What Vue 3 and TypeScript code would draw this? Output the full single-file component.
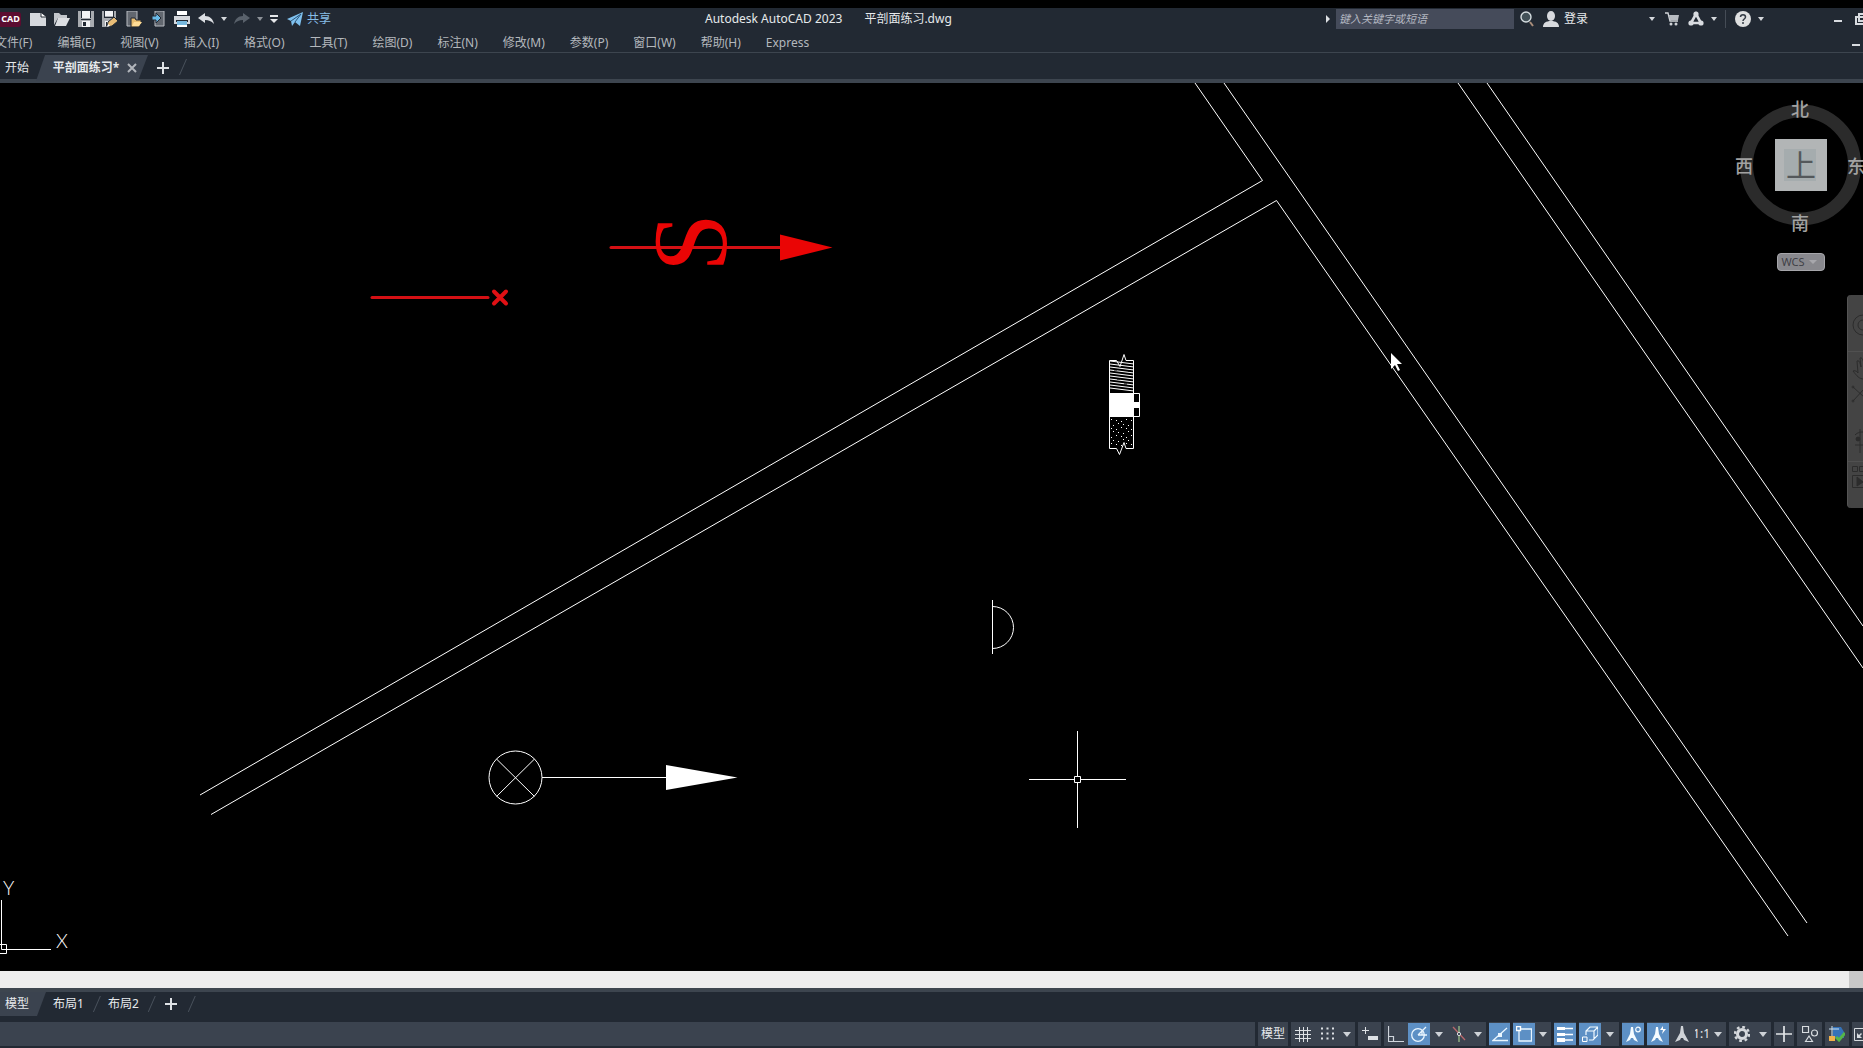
<script setup lang="ts">
interface Tool { id: string; label: string; cls: string }
interface StatusCell { id: string; label: string; w: number; sep?: boolean; on?: boolean; text?: string }

const icons: Record<string, string> = {
  new: '<path d="M0 2h11l5 4v9H0z" fill="#d5d8dd"/><path d="M11 2v4h5" fill="#fff" stroke="#222933"/>',
  open: '<path d="M0 14V2h5l2 2h6v3H4z" fill="#c3c6cb"/><path d="M4 7h12l-4 8H1z" fill="#dcdee2"/>',
  save: '<path d="M0 0h16v16H0z" fill="#a8abb0"/><path d="M4 0h8v7H4zM4 10h8v6H4z" fill="#f2f3f5"/><path d="M3 0h1v7H3zM12 0h1v7h-1zM3 8h10v1H3z" fill="#222933"/><path d="M5 11h3v4H5z" fill="#222933"/>',
  saveas: '<path d="M0 0h14v8l-6 8H0z" fill="#a8abb0"/><path d="M3 0h8v5H3zM3 10h6v5H3z" fill="#f2f3f5"/><path d="M2 0h1v6h8V0h1v7H2zM4 11h1v4H4z" fill="#222933"/><path d="M5 16l1-5 6-5 4 4-6 5z" fill="#e9bd77" stroke="#222933"/><path d="M5 16l1-3 2 2z" fill="#fff"/>',
  cloudopen: '<path d="M1 0h10v15H1z" fill="#62676f" stroke="#b9bdc3"/><path d="M5 16V7h4l1 2h5v2h1l-3 5z" fill="#e8bd70" stroke="#222933"/><path d="M6 15l2-4h8l-3 4z" fill="#ffdc96"/>',
  cloudsave: '<path d="M5 0h9v15H5z" fill="#62676f" stroke="#b9bdc3"/><path d="M2 5h4V2l5 5-5 5V9H2z" fill="#69b9e7" stroke="#222933"/>',
  print: '<path d="M3 0h10v4H3z" fill="#fff"/><path d="M0 5h16v8H0z" fill="#d4d7dc"/><path d="M2 9h12v2H2z" fill="#222933"/><path d="M3 10h10v6H3z" fill="#78b9df"/><path d="M3 14h10v2H3z" fill="#fff"/>',
  undo: '<path d="M0 7l7-5v3c5 0 8 3 9 8-3-3-5-4-9-4v3z" fill="#dcdfe3"/>',
  redo: '<path d="M16 7L9 2v3c-5 0-8 3-9 8 3-3 5-4 9-4v3z" fill="#59616b"/>',
  caret: '<path d="M5 6h6l-3 4z" fill="#d5d8dc"/>',
  bigcaret: '<path d="M4 6h8l-4 5z" fill="#ced2d7"/>',
  custom: '<path d="M4 4h8v2H4zM4 8h8l-4 4z" fill="#e5e7ea"/>',
  send: '<path d="M0 8L16 1l-3 14-5-4-3 4-1-5z" fill="#7fc0ee"/><path d="M4 10l10-7-6 8" fill="none" stroke="#2b567b"/>',
  search: '<circle cx="7" cy="6" r="5" fill="#435158" stroke="#d5dcdf" stroke-width="1.4"/><path d="M11 11l3 4" stroke="#a98d7a" stroke-width="2"/>',
  user: '<ellipse cx="8" cy="5" rx="4" ry="5" fill="#d8dade"/><path d="M0 16c0-4 3-6 8-6s8 2 8 6z" fill="#d8dade"/>',
  cart: '<path d="M1 2h3l2 8h8" fill="none" stroke="#cfd2d6" stroke-width="1.4"/><path d="M5 4h10l-1 5H6z" fill="#b8bcc2"/><circle cx="7" cy="13" r="1.5" fill="#cfd2d6"/><circle cx="12" cy="13" r="1.5" fill="#cfd2d6"/>',
  apps: '<path d="M8 3l5 9H3z" fill="none" stroke="#d8dbe0" stroke-width="2.6"/><circle cx="8" cy="3" r="2.6" fill="#d8dbe0"/><circle cx="3" cy="12" r="2.6" fill="#d8dbe0"/><circle cx="13" cy="12" r="2.6" fill="#d8dbe0"/>',
  help: '<circle cx="8" cy="8" r="8" fill="#dfe0e1"/><path d="M5.500 6c0-3 5-3 5 0 0 2-2.500 2-2.500 4M8 11v2" fill="none" stroke="#343b45" stroke-width="1.500"/>',
  grid: '<path d="M4.500 1v15M8.500 1v15M12.500 1v15M0 4.500h16M0 8.500h16M0 12.500h16" stroke="#dde1e5" fill="none"/>',
  dots: '<path d="M2 2.500h13M2 7.500h13M2 12.500h13" stroke="#dde1e5" stroke-width="2" stroke-dasharray="2 3.500" fill="none"/>',
  dyn: '<path d="M0 4.500h7M3.500 1v7" stroke="#dde1e5" fill="none"/><path d="M6 10h10v4H6z" fill="#dde1e5"/>',
  ortho: '<path d="M.5 0v15.500H16M.5 10.500h5v5" fill="none" stroke="#cfd5dc" stroke-width="1.200"/>',
  polar: '<circle cx="7" cy="9" r="6.300" fill="none" stroke="#eaf6ff" stroke-width="1.300"/><path d="M7 9h9M7 9l8-8M11 5v4" fill="none" stroke="#eaf6ff" stroke-width="1.300"/>',
  iso: '<path d="M2 1l12 13" stroke="#b8686c" stroke-width="1.300"/><path d="M8 0v16" stroke="#9abf88" stroke-width="1.300"/><circle cx="8" cy="8" r="1.600" fill="#333b46" stroke="#dde1e5"/>',
  track: '<path d="M15 2L1 14.500h15" fill="none" stroke="#eaf6ff" stroke-width="1.300"/><path d="M6 7h4v4H6z" fill="#eaf6ff"/>',
  osnap: '<path d="M3 3h12.500v12H3z" fill="none" stroke="#eaf6ff" stroke-width="1.300"/><path d="M.5.5h4v4h-4z" fill="#5d90c5" stroke="#fff" stroke-width="1.400"/>',
  lwt: '<path d="M0 1h8v3H0zM0 7h8v3H0zM0 12h8v4H0z" fill="#fff"/><path d="M8 2.500h8M8 8.500h8M8 14h8" stroke="#fff" stroke-width="1.300"/>',
  cube: '<path d="M4 9V5l4-4h8v8l-5 5H7M4 5h8v8M12 5l4-4" fill="none" stroke="#f2faff" stroke-width="1.200"/><path d="M.5 11h4.500v4.500H.5z" fill="#5d90c5" stroke="#fff"/>',
  annoA: '<path d="M6 1h2l1 7 4 8-4-2-1-2H6l-1 2-4 2 4-8z" fill="#f5fbff"/><circle cx="13" cy="3.500" r="2.300" fill="none" stroke="#f5fbff" stroke-width="1.200"/>',
  annoB: '<path d="M6 1h2l1 7 4 8-4-2-1-2H6l-1 2-4 2 4-8z" fill="#f5fbff"/><path d="M13 0l-3 4h3l-1 4 4-5h-3z" fill="#fff"/>',
  anno: '<path d="M7 0h2l1 7 5 9-5-2-1-2H7l-1 2-5 2 5-9z" fill="#cfd3d8"/>',
  gear: '<circle cx="8" cy="8" r="4.500" fill="none" stroke="#d5d8dc" stroke-width="3"/><circle cx="8" cy="8" r="7" fill="none" stroke="#d5d8dc" stroke-width="2.400" stroke-dasharray="2.750 2.750"/>',
  plus: '<path d="M8 0v16M0 8h16" stroke="#e2e5e8" stroke-width="1.700"/>',
  shapes: '<path d="M.5.5h6v6h-6zM7 10l3.500 5.500h-7z" fill="none" stroke="#d8dce0" stroke-width="1.200"/><circle cx="12.500" cy="7" r="3" fill="none" stroke="#d8dce0" stroke-width="1.200"/>',
  perf: '<path d="M4 1h8l3 5v6H4z" fill="#3472b9"/><path d="M0 3h10M3 0v14" stroke="#cfe6f7"/><path d="M0 10h6v5H0z" fill="#f0b14a"/><path d="M7 11l3 3 6-7" fill="none" stroke="#55b548" stroke-width="3"/>',
  expand: '<path d="M.5 2.500h15v12H.5z" fill="none" stroke="#d8dce0"/><path d="M3 12V7l2 2 2-2 1 1-2 2 2 2z" fill="#d8dce0"/>',
  add: '<path d="M8 2v12M2 8h12" stroke="#dfe2e6" stroke-width="2"/>',
  close: '<path d="M4 4l8 8M12 4l-8 8" stroke="#b2b6bc" stroke-width="2"/>',
  min: '<path d="M4 9h8v2H4z" fill="#d8dbe0"/>',
  restore: '<path d="M4 3h8v7H4zM1 6h8v7H1z" fill="#222933" stroke="#d8dbe0" stroke-width="2"/>',
}

const quick: Tool[] = [
  { id: 'new', label: '新建', cls: 'tool' },
  { id: 'open', label: '打开', cls: 'tool' },
  { id: 'save', label: '保存', cls: 'tool' },
  { id: 'saveas', label: '另存为', cls: 'tool' },
  { id: 'cloudopen', label: '从移动设备打开', cls: 'tool' },
  { id: 'cloudsave', label: '保存到移动设备', cls: 'tool' },
  { id: 'print', label: '打印', cls: 'tool' },
  { id: 'undo', label: '放弃', cls: 'tool' },
  { id: 'caret', label: '放弃列表', cls: 'drop' },
  { id: 'redo', label: '重做', cls: 'tool' },
  { id: 'caret', label: '重做列表', cls: 'drop dim' },
  { id: 'custom', label: '自定义', cls: 'drop last' },
]

const menus: string[] = ['文件(F)', '编辑(E)', '视图(V)', '插入(I)', '格式(O)', '工具(T)', '绘图(D)', '标注(N)', '修改(M)', '参数(P)', '窗口(W)', '帮助(H)', 'Express']

const cells: StatusCell[] = [
  { id: '', label: '模型', text: '模型', w: 30, sep: true },
  { id: 'grid', label: '栅格', w: 24, sep: true },
  { id: 'dots', label: '捕捉', w: 24 },
  { id: 'bigcaret', label: '捕捉设置', w: 16 },
  { id: 'dyn', label: '动态输入', w: 23, sep: true },
  { id: 'ortho', label: '正交', w: 24, sep: true },
  { id: 'polar', label: '极轴追踪', w: 22, on: true },
  { id: 'bigcaret', label: '极轴设置', w: 18 },
  { id: 'iso', label: '等轴测草图', w: 22 },
  { id: 'bigcaret', label: '等轴测设置', w: 16 },
  { id: 'track', label: '对象捕捉追踪', w: 21, sep: true, on: true },
  { id: 'osnap', label: '对象捕捉', w: 22, sep: true, on: true },
  { id: 'bigcaret', label: '对象捕捉设置', w: 16 },
  { id: 'lwt', label: '线宽', w: 22, sep: true, on: true },
  { id: 'cube', label: '三维对象捕捉', w: 22, sep: true, on: true },
  { id: 'bigcaret', label: '三维捕捉设置', w: 18 },
  { id: 'annoA', label: '注释可见性', w: 22, sep: true, on: true },
  { id: 'annoB', label: '自动缩放', w: 22, sep: true, on: true },
  { id: 'anno', label: '注释比例', w: 26 },
  { id: 'bigcaret', label: '比例列表', text: '1:1', w: 31 },
  { id: 'gear', label: '切换工作空间', w: 26, sep: true },
  { id: 'bigcaret', label: '工作空间列表', w: 16 },
  { id: 'plus', label: '注释监视器', w: 20, sep: true },
  { id: 'shapes', label: '隔离对象', w: 25, sep: true },
  { id: 'perf', label: '图形性能', w: 24, sep: true },
  { id: 'expand', label: '全屏显示', w: 11, sep: true },
]

const hatch = Array.from({ length: 10 }, (_, i) => 361 + i * 3)
const dots = Array.from({ length: 35 }, (_, i) => ({
  x: 1111 + (i % 5) * 5 + (Math.floor(i / 5) % 2) * 2,
  y: 419 + Math.floor(i / 5) * 4 + (i % 3),
}))
</script>

<template>
  <div class="app">
    <header class="head">
      <div class="titlebar">
        <button class="badge">CAD</button>
        <button v-for="t in quick" :key="t.label" :class="t.cls" :aria-label="t.label">
          <svg viewBox="0 0 16 16" v-html="icons[t.id]"></svg>
        </button>
        <button class="share"><svg viewBox="0 0 16 16" v-html="icons.send"></svg>共享</button>
        <h1 class="title"><span>Autodesk AutoCAD 2023</span><span>平剖面练习.dwg</span></h1>
        <div class="right">
          <button class="expander" aria-label="展开搜索"><svg viewBox="0 0 16 16"><path d="M6 4l4 4-4 4z" fill="#dde0e4" /></svg></button>
          <input class="search" type="text" placeholder="键入关键字或短语" aria-label="搜索" />
          <button class="tool" aria-label="查找"><svg viewBox="0 0 16 16" v-html="icons.search"></svg></button>
          <button class="login"><svg viewBox="0 0 16 16" v-html="icons.user"></svg>登录</button>
          <button class="drop" aria-label="登录选项"><svg viewBox="0 0 16 16" v-html="icons.caret"></svg></button>
          <button class="tool cart" aria-label="应用商店"><svg viewBox="0 0 16 16" v-html="icons.cart"></svg></button>
          <button class="tool" aria-label="Autodesk App"><svg viewBox="0 0 16 16" v-html="icons.apps"></svg></button>
          <button class="drop" aria-label="应用列表"><svg viewBox="0 0 16 16" v-html="icons.caret"></svg></button>
          <i class="rule"></i>
          <button class="tool" aria-label="帮助"><svg viewBox="0 0 16 16" v-html="icons.help"></svg></button>
          <button class="drop" aria-label="帮助列表"><svg viewBox="0 0 16 16" v-html="icons.caret"></svg></button>
          <button class="tool window" aria-label="最小化"><svg viewBox="0 0 16 16" v-html="icons.min"></svg></button>
          <button class="edge" aria-label="还原"><svg viewBox="0 0 16 16" v-html="icons.restore"></svg></button>
        </div>
      </div>
      <nav class="menubar">
        <button v-for="m in menus" :key="m">{{ m }}</button>
        <button class="docmin" aria-label="最小化图形"><svg viewBox="0 0 16 16" v-html="icons.min"></svg></button>
      </nav>
    </header>

    <div class="filetabs">
      <button class="start">开始</button>
      <div class="current">
        <button class="name">平剖面练习*</button>
        <button class="icon" aria-label="关闭"><svg viewBox="0 0 16 16" v-html="icons.close"></svg></button>
      </div>
      <button class="icon plus" aria-label="新图形"><svg viewBox="0 0 16 16" v-html="icons.add"></svg></button>
      <i class="slash"></i>
    </div>

    <main class="canvas">
      <svg class="drawing" viewBox="0 83 1863 888" preserveAspectRatio="xMinYMin slice">
        <g fill="none" stroke="#fff">
          <path d="M1195 83L1262.500 180.500L200 795" />
          <path d="M1224 83L1807 923" />
          <path d="M211 814.500L1276.500 200.500L1788 936" />
          <path d="M1458 83L1863 668M1487 83L1863 626" />
        </g>

        <g stroke="#d41014" stroke-width="3" stroke-linecap="round" fill="none">
          <path d="M372 297.500H488" />
          <path d="M611 247.500H781" />
          <path d="M494 291.500l12 12M506 291.500l-12 12" stroke="#e01014" stroke-width="4" />
        </g>
        <path d="M780 234.500v26l52.500-13z" fill="#ea0505" />
        <text class="flow" transform="translate(726 272) rotate(-90)">S</text>

        <g fill="none" stroke="#fff">
          <circle cx="515.500" cy="777.500" r="26.500" />
          <path d="M496.500 759l38 37.500M534.500 759l-38 37.500M542 777.500H667" />
          <path d="M666 765v25l71.500-12.500z" fill="#fff" stroke="none" />
          <path d="M992.500 600v54M992.500 606.500a21 21 0 0 1 0 42" />
          <path d="M1077.500 731v45M1077.500 783v45M1029 779.500h45M1081 779.500h45M1074.500 776.500h6v6h-6z" />
        </g>

        <g fill="none" stroke="#fff">
          <path d="M1109.500 393V360.500h7l3.500 6 4-12 2 6h7.500V393" />
          <path v-for="y in hatch" :key="y" :d="`M1110 ${y}l24 3`" />
          <path d="M1109 393h25v24h-25zM1134 402h6v6h-6z" fill="#fff" stroke="none" />
          <path d="M1134 393.500h5.500v23h-5.500" />
          <path d="M1109.500 416v32.500h7l3 6 4.500-12 2 6h7.500V416" />
          <path d="M1114 370h3M1124 384h3M1117 379h3M1128 371h3" stroke="#000" />
        </g>
        <rect v-for="(d, i) in dots" :key="i" :x="d.x" :y="d.y" width="1" height="1" fill="#fff" />

        <path d="M1391 353v16l4-4 3 6 2-1-3-6h5z" fill="#fff" />

        <g fill="none" stroke="#fff">
          <path d="M1.500 900v49.500H51M0 944.500h6.500v9H0" />
        </g>
        <text class="axis" x="3" y="895">Y</text>
        <text class="axis" x="56" y="948">X</text>
      </svg>

      <svg class="compass" width="129" height="140" viewBox="0 0 129 140">
        <circle cx="66.500" cy="73" r="54" fill="none" stroke="#2b2b2b" stroke-width="13" />
        <rect x="41" y="47" width="52" height="52" fill="#b2b5b6" />
        <rect x="50" y="57" width="32" height="32" fill="#a5acae" />
        <g class="dir">
          <text x="66" y="24">北</text>
          <text x="10" y="81">西</text>
          <text x="122" y="81">东</text>
          <text x="66" y="138">南</text>
        </g>
        <text class="face" x="67" y="84">上</text>
      </svg>
      <button class="wcs">WCS<svg viewBox="0 0 16 16"><path d="M4 6h8l-4 4z" fill="#a7a7ac" /></svg></button>
      <aside class="navbar">
        <svg width="16" height="213" viewBox="0 0 16 213" fill="none" stroke="#2c2c2c">
          <circle cx="15" cy="30" r="10" /><circle cx="15" cy="30" r="5" />
          <path d="M0 56.500h16M0 166.500h16" stroke="#505050" />
          <path d="M16 84c-5 0-7-3-11-8 3-1 4 1 5 2l-1-12c2-1 3 1 4 6l-1-9c2-1 3 2 4 5" />
          <path d="M5 92l11 10M5 106l11-12" /><circle cx="5" cy="92" r="1" /><circle cx="5" cy="106" r="1" />
          <circle cx="10" cy="144" r="2" fill="#2c2c2c" /><path d="M7 150h9M12 134v24M7 140c3-3 6-3 9-3" />
          <path d="M4.500 171.500h5v5h-5zM11.500 171.500h5v5h-5zM4.500 180.500H16M4.500 180.500v12H16" />
          <path d="M9 182v9l6-4z" fill="#2c2c2c" />
        </svg>
      </aside>
    </main>

    <div class="hscroll"><i></i></div>

    <div class="layouts">
      <button class="model">模型</button>
      <button>布局1</button>
      <i class="slash"></i>
      <button>布局2</button>
      <i class="slash"></i>
      <button class="icon" aria-label="新建布局"><svg viewBox="0 0 16 16" v-html="icons.add"></svg></button>
      <i class="slash"></i>
    </div>

    <footer class="status">
      <div class="fill"></div>
      <button v-for="c in cells" :key="c.label" :class="{ sep: c.sep, on: c.on }" :style="{ width: c.w + 'px' }" :aria-label="c.label">
        <span v-if="c.text">{{ c.text }}</span>
        <svg v-if="c.id" viewBox="0 0 16 16" v-html="icons[c.id]"></svg>
      </button>
    </footer>
  </div>
</template>

<style>
body { background: #000; overflow: hidden; }
</style>

<style scoped>
* { box-sizing: border-box; }
.app {
  display: flex; flex-direction: column; height: 100vh; padding-top: 8px; overflow: hidden;
  background: #000; color: #e6e9ec;
  font-family: "Noto Sans", "Noto Sans CJK SC", sans-serif; font-size: 12px; line-height: 16px;
}
button {
  display: flex; align-items: center; justify-content: center; flex: none;
  margin: 0; padding: 0; border: 0; background: none; color: inherit; font: inherit; white-space: nowrap;
}
button svg { display: block; flex: none; width: 16px; height: 16px; }
.head { flex: none; background: #222933; border-bottom: 1px solid #3d454f; }
.titlebar { position: relative; display: flex; align-items: center; height: 22px; }
.badge {
  width: 21px; height: 15px; margin-right: 5px; border-radius: 0 3px 3px 0;
  background: #5c0c30; color: #fff; font-size: 9px; font-weight: 700;
}
.tool { width: 24px; height: 22px; }
.drop { width: 12px; height: 22px; }
.titlebar > .last { width: 16px; }
.dim { opacity: 0.6; }
.share { gap: 4px; margin-left: 5px; color: #86bde6; }
.title {
  position: absolute; left: 705px; top: 3px; display: flex; gap: 22px;
  margin: 0; font-size: 12px; font-weight: 400; white-space: pre;
}
.right { display: flex; align-items: center; margin-left: auto; }
.expander { width: 16px; }
.search {
  width: 178px; height: 20px; margin-right: 1px; padding: 0 3px 2px; border: 0; border-radius: 0;
  background: #454b5a; color: #fff; font: italic 11px/16px "Noto Sans", "Noto Sans CJK SC", sans-serif;
}
.search::placeholder { color: #b3b7c1; opacity: 1; }
.login { gap: 5px; margin: 0 58px 0 4px; }
.cart { margin-left: 2px; }
.rule { width: 1px; height: 18px; margin: 0 5px; background: #454c56; }
.window { margin-left: 59px; }
.edge { justify-content: flex-start; width: 8px; margin-left: 5px; overflow: hidden; }
.menubar { display: flex; gap: 25px; height: 22px; margin-left: -5px; padding-bottom: 8px; color: #b4b8bd; }
.menubar button { height: 26px; }
.menubar .docmin { margin-left: auto; margin-right: -1px; }
.filetabs {
  display: flex; align-items: flex-start; flex: none; height: 30px; padding: 2px 0 0 5px;
  background: #222933; border-bottom: 4px solid #3d454f;
}
.filetabs button { height: 26px; }
.current {
  display: flex; width: 112px; height: 26px; margin-left: 7px; padding-left: 17px;
  background: #3b434f; clip-path: polygon(9px 0, 100% 0, calc(100% - 10px) 100%, 0 100%);
}
.current .name { width: 66px; font-weight: 700; }
.current .icon { width: 16px; margin-left: 5px; }
.filetabs .plus { margin-left: 7px; }
.slash { flex: none; width: 8px; height: 16px; background: #4a525d; clip-path: polygon(7px 0, 100% 0, 1px 100%, 0 100%); }
.filetabs .slash { margin: 4px 0 0 8px; }
.canvas { position: relative; flex: 1; min-height: 0; overflow: hidden; background: #000; }
.drawing { display: block; width: 100%; height: 100%; }
.flow { fill: #ea0505; font: 106px "Liberation Serif", serif; }
.axis { fill: #fff; font: 300 19px Lato, "Liberation Sans", sans-serif; }
.compass { position: absolute; top: 9px; right: 0; overflow: visible; }
.compass text { text-anchor: middle; font-family: "Noto Sans CJK SC", sans-serif; }
.dir { fill: #a2a2a2; font-size: 18px; font-weight: 500; }
.face { fill: #54585b; font-size: 30px; }
.wcs {
  position: absolute; top: 170px; right: 38px; width: 48px; height: 18px;
  border: 1px solid #a6a6aa; border-radius: 4px; background: #88888d; color: #404046; font-size: 11px;
}
.navbar { position: absolute; top: 212px; right: 0; width: 16px; height: 213px; border-left: 1px solid #555; border-radius: 4px 0 0 4px; background: #444; overflow: hidden; }
.hscroll { display: flex; justify-content: flex-end; flex: none; height: 17px; background: #ededed; }
.hscroll i { width: 14px; background: #c8c8c8; }
.layouts { display: flex; align-items: flex-start; flex: none; height: 34px; border-top: 4px solid #3d454f; background: #222933; }
.layouts button { height: 24px; }
.layouts .model { width: 46px; padding-right: 12px; margin-right: 7px; background: #3b434f; clip-path: polygon(0 0, 100% 0, calc(100% - 9px) 100%, 0 100%); }
.layouts .slash { margin: 4px 7px 0 9px; }
.status { display: flex; flex: none; height: 26px; padding-bottom: 2px; background: #222933; overflow: hidden; }
.fill { flex: 1; background: #3b434f; }
.status button { height: 24px; background: #3b434f; overflow: hidden; }
.status button:has(span + svg) { justify-content: flex-end; }
.status .sep { margin-left: 3px; }
.status .on { background: #5d90c5; border: solid #3b434f; border-width: 1px 0; }
.status button:last-child { justify-content: flex-start; padding-left: 2px; }
</style>
